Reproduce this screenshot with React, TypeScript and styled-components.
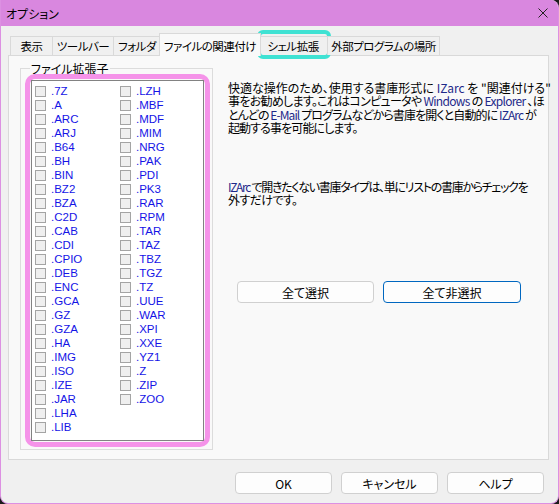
import React from 'react';
import styled, { createGlobalStyle } from 'styled-components';

const GlobalStyle = createGlobalStyle`
  html, body {
    margin: 0;
    padding: 0;
    background: #1b1b1b;
  }
  body {
    width: 559px;
    height: 504px;
    overflow: hidden;
    font-family: "Noto Sans CJK JP", "Liberation Sans", sans-serif;
    font-feature-settings: "palt";
    font-size: 12px;
    color: #000;
  }
`;

const Window = styled.div`
  width: 559px;
  height: 504px;
  box-sizing: border-box;
  display: flex;
  flex-direction: column;
  background: #f0f0f0;
  border: 1px solid #dc90e2;
  border-top: none;
  border-radius: 0 8px 8px 8px;
  overflow: hidden;
`;

const TitleBar = styled.div`
  height: 26px;
  flex: none;
  display: flex;
  align-items: center;
  justify-content: space-between;
  padding: 0 10px 0 5px;
  background: #d987df;
  font-size: 12px;
`;

const Body = styled.div`
  flex: 1;
  display: flex;
  flex-direction: column;
  padding: 7px 9px 0 7px;
`;

const TabStrip = styled.div`
  display: flex;
  align-items: flex-end;
  height: 22px;
  padding-left: 3px;
  position: relative;
  z-index: 1;
`;

const Tab = styled.div<{ $active?: boolean; $w: number }>`
  position: relative;
  box-sizing: border-box;
  flex: none;
  width: ${p => p.$w}px;
  height: ${p => (p.$active ? 23 : 19)}px;
  margin: ${p => (p.$active ? '0 -2px -1px -2px' : '0 0 0 -1px')};
  padding-top: ${p => (p.$active ? 2 : 0)}px;
  display: flex;
  align-items: center;
  justify-content: center;
  background: ${p => (p.$active ? '#f9f9f9' : '#f0f0f0')};
  border: 1px solid #d9d9d9;
  border-bottom: none;
  white-space: nowrap;
  font-size: 11.5px;
  letter-spacing: -0.5px;
  z-index: ${p => (p.$active ? 2 : 1)};
`;

const Highlight = styled.div`
  position: absolute;
  left: -2px;
  right: -4px;
  top: -7px;
  bottom: -4px;
  border: 4px solid #3fe2d3;
  border-radius: 6px;
  pointer-events: none;
`;

const Panel = styled.div`
  height: 405px;
  flex: none;
  box-sizing: border-box;
  display: flex;
  padding: 6px 0 0 11px;
  background: #f9f9f9;
  border: 1px solid #d9d9d9;
`;

const GroupBox = styled.fieldset`
  margin: 0;
  flex: none;
  width: 193px;
  height: 388px;
  box-sizing: border-box;
  padding: 0 2px 2px 4px;
  border: 1px solid #dcdcdc;
  display: flex;
  flex-direction: column;
`;

const Legend = styled.legend`
  margin-left: 5px;
  padding: 0 1px;
  line-height: 13px;
  font-size: 12px;
`;

const PinkFrame = styled.div`
  flex: 1;
  margin-top: -1px;
  display: flex;
  padding: 1px;
  border: 5px solid #f593e9;
  border-radius: 10px;
`;

const ListBox = styled.div`
  flex: 1;
  display: grid;
  grid-auto-flow: column;
  grid-template-rows: repeat(25, 14px);
  grid-template-columns: 85px 1fr;
  align-content: start;
  padding: 3px 0 0 3px;
  background: #fff;
  border: 1px solid #828282;
`;

const Row = styled.div`
  display: flex;
  align-items: center;
  gap: 5px;
  height: 14px;
`;

const Box = styled.span`
  width: 11px;
  height: 11px;
  box-sizing: border-box;
  flex: none;
  border: 1px solid #a4a4a4;
  background: #efefef;
`;

const Ext = styled.span`
  font-family: "Liberation Sans", sans-serif;
  font-size: 11.5px;
  line-height: 14px;
  color: #1414e6;
`;

const RightPane = styled.div`
  flex: 1;
  min-width: 0;
  display: flex;
  flex-direction: column;
  padding: 19px 0 0 15px;
`;

const Para = styled.div<{ $gap?: number }>`
  margin-top: ${p => p.$gap ?? 0}px;
  line-height: 13.4px;
`;

const Line = styled.div<{ $ls?: number }>`
  white-space: nowrap;
  letter-spacing: ${p => p.$ls ?? 0}px;
`;

const Name = styled.span`
  color: #1f2a8a;
`;

const ButtonRow = styled.div`
  display: flex;
  gap: 9px;
  margin-top: 75px;
  padding-left: 9px;
`;

const Button = styled.button<{ $primary?: boolean; $w: number }>`
  width: ${p => p.$w}px;
  height: 22px;
  box-sizing: border-box;
  padding: 0;
  font-family: inherit;
  font-size: 12px;
  font-feature-settings: "palt";
  color: #000;
  background: #fdfdfd;
  border: 1px solid ${p => (p.$primary ? '#0067c0' : '#d0d0d0')};
  border-radius: 4px;
`;

const Footer = styled.div`
  display: flex;
  justify-content: flex-end;
  gap: 9px;
  padding: 12px 5px 0 0;
`;

const col1 = ['.7Z', '.A', '.ARC', '.ARJ', '.B64', '.BH', '.BIN', '.BZ2', '.BZA', '.C2D', '.CAB', '.CDI', '.CPIO', '.DEB', '.ENC', '.GCA', '.GZ', '.GZA', '.HA', '.IMG', '.ISO', '.IZE', '.JAR', '.LHA', '.LIB'];
const col2 = ['.LZH', '.MBF', '.MDF', '.MIM', '.NRG', '.PAK', '.PDI', '.PK3', '.RAR', '.RPM', '.TAR', '.TAZ', '.TBZ', '.TGZ', '.TZ', '.UUE', '.WAR', '.XPI', '.XXE', '.YZ1', '.Z', '.ZIP', '.ZOO'];

const tabs = [
  { label: '表示', w: 43 },
  { label: 'ツールバー', w: 62 },
  { label: 'フォルダ', w: 48 },
  { label: 'ファイルの関連付け', w: 102, active: true },
  { label: 'シェル拡張', w: 70, highlight: true },
  { label: '外部プログラムの場所', w: 113 },
];

export default function App() {
  return (
    <>
      <GlobalStyle />
      <Window>
        <TitleBar>
          <span>オプション</span>
          <svg width="10" height="10" viewBox="0 0 10 10">
            <path d="M0.5 0.5 L9.5 9.5 M9.5 0.5 L0.5 9.5" stroke="#222" strokeWidth="1" />
          </svg>
        </TitleBar>
        <Body>
          <TabStrip>
            {tabs.map(t => (
              <Tab key={t.label} $w={t.w} $active={t.active}>
                {t.label}
                {t.highlight && <Highlight />}
              </Tab>
            ))}
          </TabStrip>
          <Panel>
            <GroupBox>
              <Legend>ファイル拡張子</Legend>
              <PinkFrame>
                <ListBox>
                  {[...col1, ...col2].map(e => (
                    <Row key={e}>
                      <Box />
                      <Ext>{e}</Ext>
                    </Row>
                  ))}
                </ListBox>
              </PinkFrame>
            </GroupBox>
            <RightPane>
              <Para>
                <Line>快適な操作のため、使用する書庫形式に <Name>IZarc</Name> を "関連付ける"</Line>
                <Line $ls={-0.7}>事をお勧めします。これはコンピュータや <Name>Windows</Name> の <Name>Explorer</Name> 、ほ</Line>
                <Line $ls={-0.9}>とんどの <Name>E-Mail</Name> プログラムなどから書庫を開くと自動的に <Name>IZArc</Name> が</Line>
                <Line $ls={-0.9}>起動する事を可能にします。</Line>
              </Para>
              <Para $gap={45}>
                <Line $ls={-1.3}><Name>IZArc</Name> で開きたくない書庫タイプは、単にリストの書庫からチェックを</Line>
                <Line $ls={-0.6}>外すだけです。</Line>
              </Para>
              <ButtonRow>
                <Button $w={137}>全て選択</Button>
                <Button $w={138} $primary>全て非選択</Button>
              </ButtonRow>
            </RightPane>
          </Panel>
          <Footer>
            <Button $w={97}>OK</Button>
            <Button $w={97}>キャンセル</Button>
            <Button $w={97}>ヘルプ</Button>
          </Footer>
        </Body>
      </Window>
    </>
  );
}
